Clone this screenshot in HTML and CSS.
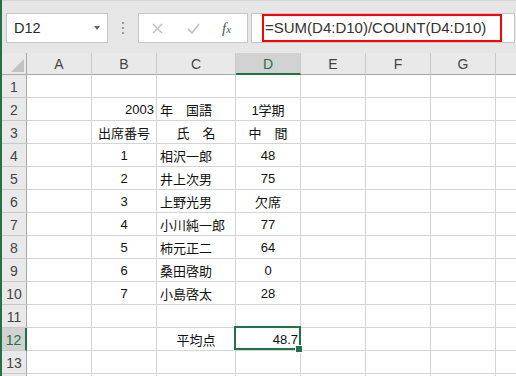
FILE: index.html
```html
<!DOCTYPE html>
<html lang="ja">
<head>
    <meta charset="UTF-8">
    <title>Book1 - Excel</title>
    <link rel="stylesheet" href="styles.css">
</head>
<body>

    <div class="toolbar">
        <div class="name-box">
            <span>D12</span>
            <span class="caret"></span>
        </div>
        <div class="grip"><i></i><i></i><i></i></div>
        <div class="fx-box">
            <svg class="icon-cancel" width="11" height="11" viewBox="0 0 11 11">
                <path d="M1 1 L10 10 M10 1 L1 10" stroke="#c4c4c4" stroke-width="1.6" fill="none"/>
            </svg>
            <svg class="icon-enter" width="13" height="11" viewBox="0 0 13 11">
                <path d="M1 6 L5 10 L12 1" stroke="#c4c4c4" stroke-width="1.8" fill="none"/>
            </svg>
            <span class="fx">f<small>x</small></span>
        </div>
        <div class="formula">
            <span class="formula-text">=SUM(D4:D10)/COUNT(D4:D10)</span>
        </div>
    </div>

    <div class="sheet" id="sheet"></div>

    <script>
        // cell values for columns B, C, D
        const data = {
            2: [["2003", "right"], ["年　国語", "left"], ["1学期", "center"]],
            3: [["出席番号", "center"], ["氏　名", "center"], ["中　間", "center"]],
            4: [["1", "center"], ["相沢一郎", "left"], ["48", "center"]],
            5: [["2", "center"], ["井上次男", "left"], ["75", "center"]],
            6: [["3", "center"], ["上野光男", "left"], ["欠席", "center"]],
            7: [["4", "center"], ["小川純一郎", "left"], ["77", "center"]],
            8: [["5", "center"], ["柿元正二", "left"], ["64", "center"]],
            9: [["6", "center"], ["桑田啓助", "left"], ["0", "center"]],
            10: [["7", "center"], ["小島啓太", "left"], ["28", "center"]],
            12: [["", "center"], ["平均点", "center"], ["48.7", "right"]]
        };
        const cols = ["A", "B", "C", "D", "E", "F", "G", ""];
        const sheet = document.getElementById("sheet");
        let html = '<div class="cell corner"><span class="tri"></span></div>';

        cols.forEach(c => {
            html += `<div class="cell col-head${c === "D" ? " active" : ""}">${c}</div>`;
        });

        // last row only peeks in at the bottom edge
        for (let r = 1; r <= 14; r++) {
            const label = r < 14 ? r : "";
            html += `<div class="cell row-head${r === 12 ? " active" : ""}">${label}</div>`;
            cols.forEach((c, i) => {
                const item = data[r] && i >= 1 && i <= 3 ? data[r][i - 1] : ["", "left"];
                const sel = r === 12 && c === "D" ? " selected" : "";
                html += `<div class="cell ${item[1]}${sel}">${item[0]}</div>`;
            });
        }
        sheet.innerHTML = html;
    </script>
</body>
</html>
```

FILE: styles.css
```css
* {
    margin: 0;
    padding: 0;
    box-sizing: border-box;
}

body {
    width: 516px;
    height: 376px;
    overflow: hidden;
    background: #fff;
    border-left: 2px solid #217346;
    font-family: "Liberation Sans", "Noto Sans CJK JP", sans-serif;
}

/* formula bar */
.toolbar {
    height: 53px;
    background: #e6e6e6;
    border-top: 1px solid #d4d4d4;
    display: flex;
    align-items: flex-start;
    padding: 12px 0 0 4px;
}

.name-box {
    width: 102px;
    height: 30px;
    background: #fff;
    border: 1px solid #c6c6c6;
    display: flex;
    align-items: center;
    justify-content: space-between;
    padding: 0 7px;
    font-size: 14.5px;
    color: #2a2a2a;
}

.caret {
    border-left: 3.5px solid transparent;
    border-right: 3.5px solid transparent;
    border-top: 4px solid #666;
}

.grip {
    display: flex;
    flex-direction: column;
    gap: 3px;
    margin: 9px 0 0 14px;
}

.grip i {
    width: 2px;
    height: 2px;
    background: #9a9a9a;
}

.fx-box {
    margin-left: 14px;
    width: 110px;
    height: 30px;
    background: #fff;
    border: 1px solid #c6c6c6;
    display: flex;
    align-items: center;
    padding-left: 13px;
}

.icon-enter {
    margin-left: 24px;
}

.fx {
    margin-left: 22px;
    font-family: "Liberation Serif", serif;
    font-style: italic;
    font-size: 15px;
    color: #555;
}

.fx small {
    font-size: 11px;
}

.formula {
    flex: 1;
    margin: 0 1px 0 3px;
    height: 30px;
    background: #fff;
    border: 1px solid #c6c6c6;
    padding: 0 0 0 10px;
}

.formula-text {
    display: block;
    width: 240px;
    height: 28px;
    border: 2px solid #f00;
    padding-left: 1px;
    font-size: 15px;
    line-height: 24px;
    color: #333;
}

/* worksheet grid */
.sheet {
    display: grid;
    grid-template-columns: 25px 65px 65px 79px 65px 65px 65px 65px 65px;
    grid-template-rows: 22px;
    grid-auto-rows: 23px;
}

.cell {
    border-right: 1px solid #d4d4d4;
    border-bottom: 1px solid #d4d4d4;
    display: flex;
    align-items: center;
    padding: 1px 3px 0;
    font-size: 13px;
    color: #111;
    white-space: nowrap;
}

.left {
    justify-content: flex-start;
}

.center {
    justify-content: center;
}

.right {
    justify-content: flex-end;
    padding-right: 2px;
}

.col-head, .row-head, .corner {
    background: #e9e9e9;
    font-size: 14px;
    color: #444;
    justify-content: center;
    border-color: #c8c8c8;
}

.col-head, .corner {
    border-bottom-color: #a8a8a8;
}

.row-head, .corner {
    border-right-color: #a8a8a8;
}

.col-head.active {
    background: #d2d2d2;
    color: #217346;
    border-bottom: 2px solid #217346;
}

.row-head.active {
    background: #d2d2d2;
    color: #217346;
    border-right: 2px solid #217346;
}

.corner {
    justify-content: flex-end;
    align-items: flex-end;
    padding: 0 2px 2px 0;
}

.tri {
    width: 0;
    height: 0;
    border-left: 13px solid transparent;
    border-bottom: 13px solid #c2c2c2;
}

/* active cell frame and fill handle */
.selected {
    position: relative;
}

.selected::before {
    content: "";
    position: absolute;
    top: -2px;
    left: -2px;
    right: -1px;
    bottom: 0;
    border: 2px solid #217346;
}

.selected::after {
    content: "";
    position: absolute;
    right: -3px;
    bottom: -3px;
    width: 6px;
    height: 6px;
    background: #217346;
    border: 1px solid #fff;
}
```
